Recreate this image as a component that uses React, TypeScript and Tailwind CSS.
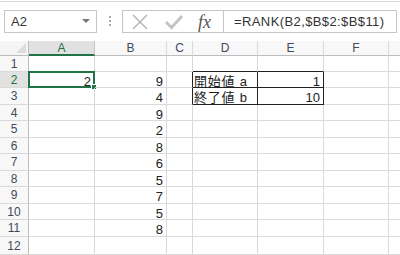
import React from "react";

const FONT = { fontFamily: '"Liberation Sans", "Noto Sans CJK JP", Arial, sans-serif' };

const colWidths = [66, 72, 26, 65, 66, 65, 40];
const colNames = ["A", "B", "C", "D", "E", "F", ""];
const rowHeights = [16, 16, 17, 16, 17, 16, 17, 16, 17, 16, 17, 18];

const bValues: Record<number, string> = {
  2: "9", 3: "4", 4: "9", 5: "2", 6: "8", 7: "6", 8: "5", 9: "7", 10: "5", 11: "8",
};

function cellContent(r: number, c: number): { text: string; align: "l" | "r" } | null {
  if (c === 0 && r === 2) return { text: "2", align: "r" };
  if (c === 1 && bValues[r]) return { text: bValues[r], align: "r" };
  if (c === 3 && r === 2) return { text: "開始値 a", align: "l" };
  if (c === 3 && r === 3) return { text: "終了値 b", align: "l" };
  if (c === 4 && r === 2) return { text: "1", align: "r" };
  if (c === 4 && r === 3) return { text: "10", align: "r" };
  return null;
}

function Cell({ r, c }: { r: number; c: number }) {
  const content = cellContent(r, c);
  const blackRight = (r === 2 || r === 3) && (c === 2 || c === 3 || c === 4);
  const blackBottom = (r === 1 || r === 2 || r === 3) && (c === 3 || c === 4);
  const rightCls = blackRight ? "border-r-[#222]" : "border-r-[#d9d9d9]";
  const bottomCls = blackBottom ? "border-b-[#222]" : "border-b-[#dadada]";
  const isJa = c === 3;
  return (
    <div
      className={`relative flex shrink-0 items-start border-r border-b ${rightCls} ${bottomCls} ${
        content?.align === "r" ? "justify-end pr-[3px]" : "justify-start pl-[1px]"
      }`}
      style={{ width: colWidths[c] }}
    >
      {content && (
        <span
          className={`pt-[4px] text-[13px] leading-[12px] text-[#222] whitespace-nowrap ${
            isJa ? "tracking-[0.8px]" : ""
          }`}
        >
          {content.text}
        </span>
      )}
      {r === 2 && c === 0 && (
        <div className="absolute -left-[1px] -top-[1px] -right-[1px] -bottom-[1px] border-2 border-[#217346]">
          <div className="absolute -right-[4px] -bottom-[4px] h-[6px] w-[6px] border border-white bg-[#217346]" />
        </div>
      )}
    </div>
  );
}

export default function App() {
  return (
    <div className="h-[255px] w-[400px] overflow-hidden bg-white" style={FONT}>
      {/* toolbar */}
      <div className="mt-[1px] h-[40px] border-t border-[#d6d6d6] bg-white">
        <div className="flex items-start pt-[8px]">
          <div className="ml-[4px] flex h-[23px] w-[93px] items-center justify-between border border-[#c6c6c6] bg-white pl-[6px] pr-[6px]">
            <span className="text-[13px] text-[#333]">A2</span>
            <svg width="8" height="5" viewBox="0 0 8 5">
              <path d="M0 0 L8 0 L4 4 Z" fill="#777" />
            </svg>
          </div>
          <div className="ml-[12px] mt-[6px] flex flex-col gap-[2px]">
            <div className="h-[2px] w-[2px] bg-[#aaa]" />
            <div className="h-[2px] w-[2px] bg-[#aaa]" />
            <div className="h-[2px] w-[2px] bg-[#aaa]" />
          </div>
          <div className="ml-[11px] flex h-[23px] w-[275px] border border-[#c6c6c6] bg-white">
            <div className="flex w-[101px] items-center border-r border-[#c6c6c6]">
              <svg className="ml-[9px]" width="16" height="16" viewBox="0 0 16 16">
                <path d="M1 1 L15 15 M15 1 L1 15" stroke="#b9b9b9" strokeWidth="1.6" />
              </svg>
              <svg className="ml-[17px]" width="18" height="16" viewBox="0 0 18 16">
                <path d="M1 8 L6.5 13.5 L17 2" stroke="#c4c4c4" strokeWidth="3" fill="none" />
              </svg>
              <span
                className="ml-[15px] text-[18px] italic leading-none text-[#555]"
                style={{ fontFamily: '"Liberation Serif", "Times New Roman", serif' }}
              >
                fx
              </span>
            </div>
            <div className="flex items-center pl-[10px]">
              <span className="whitespace-nowrap text-[13px] tracking-[0.4px] text-[#333]">
                =RANK(B2,$B$2:$B$11)
              </span>
            </div>
          </div>
        </div>
      </div>

      {/* column headers */}
      <div className="flex h-[15px]">
        <div className="relative flex w-[29px] shrink-0 border-r border-b border-[#bdbdbd] bg-[#f5f5f5]">
          <svg className="absolute right-[2px] bottom-[2px]" width="10" height="10" viewBox="0 0 10 10">
            <path d="M10 0 L10 10 L0 10 Z" fill="#dcdcdc" />
          </svg>
        </div>
        {colNames.map((n, i) => (
          <div
            key={i}
            className={`flex shrink-0 items-center justify-center border-r text-[12px] leading-none ${
              i === 0
                ? "border-b-2 border-r-[#c6c6c6] border-b-[#217346] bg-[#e1e1e1] text-[#217346]"
                : "border-b border-r-[#dadada] border-b-[#bdbdbd] bg-[#f8f8f8] text-[#3f4a5c]"
            }`}
            style={{ width: colWidths[i] }}
          >
            {n}
          </div>
        ))}
      </div>

      {/* rows */}
      {rowHeights.map((h, idx) => {
        const r = idx + 1;
        return (
          <div key={r} className="flex" style={{ height: h }}>
            <div
              className={`flex w-[29px] shrink-0 items-center justify-center border-r border-b border-r-[#bdbdbd] border-b-[#dadada] text-[12px] leading-none ${
                r === 2 ? "bg-[#e1e1e1] text-[#217346]" : "bg-[#f8f8f8] text-[#3f4a5c]"
              }`}
            >
              {r}
            </div>
            {colNames.map((_, c) => (
              <Cell key={c} r={r} c={c} />
            ))}
          </div>
        );
      })}
    </div>
  );
}
